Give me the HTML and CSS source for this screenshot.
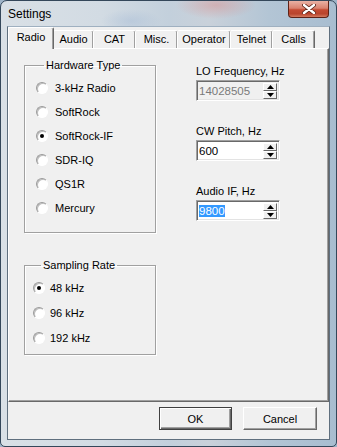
FILE: index.html
```html
<!DOCTYPE html>
<html lang="en">
<head>
  <meta name="viewport" content="width=device-width, initial-scale=1.0">
  <title>Settings</title>
  <link rel="stylesheet" href="styles.css">
</head>
<body>

  <div class="window">
    <div class="titlebar">
      <span class="title">Settings</span>
      <span class="close-btn">
        <svg width="14" height="10" viewBox="0 0 14 10">
          <path d="M2 1 L12 9 M12 1 L2 9" stroke="#5a2418" stroke-width="4" stroke-linecap="round"/>
          <path d="M2 1 L12 9 M12 1 L2 9" stroke="#ffffff" stroke-width="2.4" stroke-linecap="round"/>
        </svg>
      </span>
    </div>

    <div class="client">
      <div class="tabs">
        <div class="tab active">Radio</div>
        <div class="tab w-audio">Audio</div>
        <div class="tab w-43">CAT</div>
        <div class="tab w-43">Misc.</div>
        <div class="tab w-operator">Operator</div>
        <div class="tab w-43">Telnet</div>
        <div class="tab w-43">Calls</div>
      </div>

      <div class="panel">
        <div class="col-left">
          <fieldset class="group hw">
            <legend>Hardware Type</legend>
            <div class="radio"><span class="circle"></span>3-kHz Radio</div>
            <div class="radio"><span class="circle"></span>SoftRock</div>
            <div class="radio"><span class="circle checked"></span>SoftRock-IF</div>
            <div class="radio"><span class="circle"></span>SDR-IQ</div>
            <div class="radio"><span class="circle"></span>QS1R</div>
            <div class="radio"><span class="circle"></span>Mercury</div>
          </fieldset>

          <fieldset class="group rate">
            <legend>Sampling Rate</legend>
            <div class="radio"><span class="circle checked"></span>48 kHz</div>
            <div class="radio"><span class="circle"></span>96 kHz</div>
            <div class="radio"><span class="circle"></span>192 kHz</div>
          </fieldset>
        </div>

        <div class="col-right">
          <div class="field">
            <div class="field-label">LO Frequency, Hz</div>
            <div class="spin disabled">
              <span class="value">14028505</span>
              <span class="spin-btns">
                <span class="half"><svg width="7" height="4"><polygon points="0,4 3.5,0 7,4" fill="#000"/></svg></span>
                <span class="half"><svg width="7" height="4"><polygon points="0,0 3.5,4 7,0" fill="#000"/></svg></span>
              </span>
            </div>
          </div>
          <div class="field">
            <div class="field-label">CW Pitch, Hz</div>
            <div class="spin">
              <span class="value">600</span>
              <span class="spin-btns">
                <span class="half"><svg width="7" height="4"><polygon points="0,4 3.5,0 7,4" fill="#000"/></svg></span>
                <span class="half"><svg width="7" height="4"><polygon points="0,0 3.5,4 7,0" fill="#000"/></svg></span>
              </span>
            </div>
          </div>
          <div class="field">
            <div class="field-label">Audio IF, Hz</div>
            <div class="spin">
              <span class="value"><span class="selected">9800</span></span>
              <span class="spin-btns">
                <span class="half"><svg width="7" height="4"><polygon points="0,4 3.5,0 7,4" fill="#000"/></svg></span>
                <span class="half"><svg width="7" height="4"><polygon points="0,0 3.5,4 7,0" fill="#000"/></svg></span>
              </span>
            </div>
          </div>
        </div>
      </div>

      <div class="buttons">
        <button class="btn default">OK</button>
        <button class="btn w-cancel">Cancel</button>
      </div>
    </div>
  </div>

</body>
</html>
```

FILE: styles.css
```css
body {
  margin: 0;
  font-family: "Liberation Sans", Arial, sans-serif;
  font-size: 11px;
  color: #000;
  background: #9fb4c8;
}
.window {
  width: 337px;
  height: 447px;
  box-sizing: border-box;
  border: 1px solid #34475a;
  border-radius: 7px 7px 5px 5px;
  display: flex;
  flex-direction: column;
  overflow: hidden;
  background:
    radial-gradient(ellipse 40px 14px at 215px 4px, rgba(214, 150, 150, 0.55), rgba(214, 150, 150, 0)),
    radial-gradient(ellipse 30px 12px at 130px 20px, rgba(170, 190, 215, 0.5), rgba(170, 190, 215, 0)),
    linear-gradient(90deg, #d9e0e6 0%, #d2dbe3 30%, #c3d0dc 50%, #c9d1da 62%, #b3c5d5 80%, #a8bdd0 100%);
}
.titlebar {
  height: 25px;
  display: flex;
  justify-content: space-between;
  align-items: center;
  padding-left: 7px;
}
.title {
  font-size: 12px;
  color: #000;
}
.close-btn {
  align-self: flex-start;
  width: 41px;
  height: 17px;
  margin-right: 7px;
  box-sizing: border-box;
  border: 1px solid #5e2216;
  border-top: none;
  border-radius: 0 0 4px 4px;
  background: linear-gradient(#e9b1a4 0%, #d9826f 45%, #c44b33 55%, #b9442c 80%, #d47a5f 100%);
  display: flex;
  align-items: center;
  justify-content: center;
}
.client {
  flex: 1;
  margin: 0 6px 6px;
  border: 1px solid #5f6f7e;
  border-top-color: #9fb0c0;
  background: #f0f0f0;
  display: flex;
  flex-direction: column;
}

/* tabs */
.tabs {
  height: 21px;
  display: flex;
  align-items: flex-end;
  position: relative;
  z-index: 1;
}
.tab {
  height: 18px;
  width: 41px;
  box-sizing: border-box;
  margin-left: -1px;
  border: 1px solid;
  border-bottom: none;
  border-color: #fff #696969 #fff #fff;
  box-shadow: inset -1px 0 0 #a0a0a0;
  border-radius: 2px 2px 0 0;
  background: #f0f0f0;
  display: flex;
  justify-content: center;
  padding-top: 2px;
}
.tab.active {
  width: 46px;
  height: 22px;
  margin: 0 0 -1px 0;
  padding-top: 3px;
  z-index: 2;
}
.w-audio { width: 41px; }
.w-43 { width: 43px; }
.w-operator { width: 54px; }

.panel {
  flex: 1;
  box-sizing: border-box;
  border: 1px solid;
  border-color: #fff #696969 #696969 #fff;
  box-shadow: inset -1px -1px 0 #a0a0a0;
  padding: 10px 0 0 15px;
  display: flex;
}

/* group boxes */
.group {
  margin: 0;
  width: 132px;
  box-sizing: border-box;
  border: 1px solid #a0a0a0;
  box-shadow: inset 1px 1px 0 #fff, 1px 1px 0 #fff;
  padding: 4px 0 12px 11px;
}
.group legend {
  padding: 0 2px;
  margin-left: 8px;
  line-height: 13px;
}
.radio {
  height: 24px;
  display: flex;
  align-items: center;
  gap: 7px;
}
.rate {
  margin-top: 26px;
  padding: 3px 0 4px 8px;
}
.rate .radio {
  height: 25px;
  gap: 5px;
}
.circle {
  width: 12px;
  height: 12px;
  box-sizing: border-box;
  border-radius: 50%;
  border: 1px solid;
  border-color: #9a9a9a #fff #fff #9a9a9a;
  box-shadow: inset 1px 1px 0 #bdbdbd;
  background: #fff;
  display: flex;
  align-items: center;
  justify-content: center;
}
.circle.checked::after {
  content: "";
  width: 4px;
  height: 4px;
  border-radius: 50%;
  background: #000;
}

/* spin edits */
.col-right {
  margin-left: 40px;
  padding-top: 6px;
}
.field {
  margin-bottom: 24px;
}
.field-label {
  line-height: 13px;
  margin-bottom: 2px;
}
.spin {
  width: 84px;
  height: 21px;
  box-sizing: border-box;
  border: 1px solid;
  border-color: #a0a0a0 #fff #fff #a0a0a0;
  box-shadow: inset 1px 1px 0 #696969, inset -1px -1px 0 #e3e3e3;
  background: #fff;
  padding: 2px 2px 2px 2px;
  display: flex;
  align-items: center;
}
.spin.disabled {
  background: #f0f0f0;
  color: #7a7a7a;
}
.value {
  flex: 1;
  font-size: 11.5px;
  padding-left: 0;
}
.selected {
  background: #3399ff;
  color: #fff;
}
.spin-btns {
  width: 14px;
  height: 16px;
  display: flex;
  flex-direction: column;
}
.half {
  flex: 1;
  box-sizing: border-box;
  border: 1px solid;
  border-color: #fff #696969 #696969 #fff;
  background: #f0f0f0;
  display: flex;
  align-items: center;
  justify-content: center;
}
.half svg {
  display: block;
}

/* dialog buttons */
.buttons {
  height: 37px;
  box-sizing: border-box;
  padding: 5px 12px 0 0;
  display: flex;
  justify-content: flex-end;
  align-items: flex-start;
  gap: 11px;
}
.btn {
  width: 73px;
  height: 23px;
  font-family: "Liberation Sans", Arial, sans-serif;
  font-size: 11px;
  color: #000;
  background: #f0f0f0;
  border: 1px solid;
  border-color: #fff #696969 #696969 #fff;
  box-shadow: inset -1px -1px 0 #a0a0a0;
  padding: 0;
}
.btn.default {
  border: 1px solid #404040;
  box-shadow: inset 1px 1px 0 #fff, inset -1px -1px 0 #696969, inset -2px -2px 0 #a0a0a0;
}
.w-cancel { width: 74px; }
```
